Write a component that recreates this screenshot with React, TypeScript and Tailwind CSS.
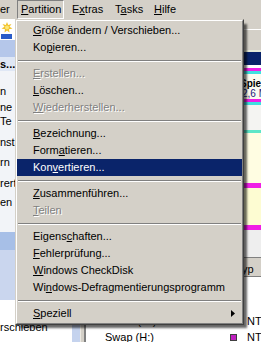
import React from "react";

type Item =
  | { sep: true }
  | { sep?: false; t: string; u: number; dis?: boolean; hl?: boolean; sub?: boolean };

const items: Item[] = [
  { t: "Größe ändern / Verschieben...", u: 0 },
  { t: "Kopieren...", u: 2 },
  { sep: true },
  { t: "Erstellen...", u: 0, dis: true },
  { t: "Löschen...", u: 0 },
  { t: "Wiederherstellen...", u: 0, dis: true },
  { sep: true },
  { t: "Bezeichnung...", u: 0 },
  { t: "Formatieren...", u: 4 },
  { t: "Konvertieren...", u: 3, hl: true },
  { sep: true },
  { t: "Zusammenführen...", u: 0 },
  { t: "Teilen", u: 0, dis: true },
  { sep: true },
  { t: "Eigenschaften...", u: 6 },
  { t: "Fehlerprüfung...", u: 0 },
  { t: "Windows CheckDisk", u: 0 },
  { t: "Windows-Defragmentierungsprogramm", u: 2 },
  { sep: true },
  { t: "Speziell", u: 0, sub: true },
];

function Mn({ t, u }: { t: string; u: number }) {
  return (
    <span className="whitespace-pre">
      {t.slice(0, u)}
      <span className="underline underline-offset-[1px]">{t.charAt(u)}</span>
      {t.slice(u + 1)}
    </span>
  );
}

function Menu() {
  return (
    <div className="absolute left-[15px] top-[19px] w-[229px] border border-t-[#d4d0c8] border-l-[#d4d0c8] border-r-[#404040] border-b-[#404040] bg-[#d4d0c8] shadow-[4px_4px_2px_-1px_rgba(0,0,0,0.6)]">
      <div className="border border-t-white border-l-white border-r-[#808080] border-b-[#808080] py-[1px]">
        {items.map((it, i) =>
          it.sep ? (
            <div key={i} className="h-[9px] flex items-center px-[1px]">
              <div className="w-full h-[2px] border-t border-t-[#808080] border-b border-b-white" />
            </div>
          ) : (
            <div
              key={i}
              className={
                "h-[17px] flex items-center pl-[16px] pr-[8px] relative " +
                (it.hl
                  ? "bg-[#0a246a] text-white"
                  : it.dis
                  ? "text-[#808080] [text-shadow:1px_1px_0_#ffffff]"
                  : "text-black")
              }
            >
              <Mn t={it.t} u={it.u} />
              {it.sub && (
                <svg className="absolute right-[7px] top-[5px]" width="4" height="7" viewBox="0 0 4 7">
                  <path d="M0 0 L4 3.5 L0 7 Z" fill="#000" />
                </svg>
              )}
            </div>
          )
        )}
      </div>
    </div>
  );
}

function Sidebar() {
  return (
    <div className="w-[72px] shrink-0 flex flex-col bg-[#f2f4f8] text-black overflow-hidden">
      <div className="h-[21px] shrink-0 bg-white relative">
        <svg className="absolute left-[1px] top-[3px]" width="12" height="17" viewBox="0 0 12 17">
          <path d="M6 0 L7.2 3 L10.5 2 L8.5 4.8 L11.5 6.5 L8 7.2 L8.5 10.5 L6 8.5 L3.5 10.5 L4 7.2 L0.5 6.5 L3.5 4.8 L1.5 2 L4.8 3 Z" fill="#f2c22a" />
          <circle cx="6" cy="5.5" r="2" fill="#fbe77a" />
          <rect x="0" y="12" width="11" height="5" fill="#2a5cc8" />
        </svg>
      </div>
      <div className="h-[17px] shrink-0 bg-[#b5c7ea]" />
      <div className="h-[14px] shrink-0 bg-[#dfe7f5] flex items-center font-bold">s...</div>
      <div className="h-[12px] shrink-0" />
      <div className="h-[16px] shrink-0 flex items-center">n</div>
      <div className="h-[16px] shrink-0 flex items-center">ne</div>
      <div className="h-[13px] shrink-0 flex items-center">Te</div>
      <div className="h-[6px] shrink-0" />
      <div className="h-[16px] shrink-0 flex items-center">nsta</div>
      <div className="h-[4px] shrink-0" />
      <div className="h-[16px] shrink-0 flex items-center">rn</div>
      <div className="h-[5px] shrink-0" />
      <div className="h-[16px] shrink-0 flex items-center">rert</div>
      <div className="h-[3px] shrink-0" />
      <div className="h-[16px] shrink-0 flex items-center">en</div>
      <div className="h-[22px] shrink-0" />
      <div className="h-[18px] shrink-0 bg-[#a7bfe7]" />
      <div className="h-[50px] shrink-0 bg-[#cad6ee]" />
      <div className="flex-1 bg-white flex flex-col">
        <div className="h-[19px] shrink-0" />
        <div className="h-[16px] shrink-0 flex items-center whitespace-nowrap">rschieben</div>
      </div>
    </div>
  );
}

function RightPane() {
  return (
    <div className="flex-1 min-w-0 flex flex-col bg-white overflow-hidden">
      <div className="h-[11px] shrink-0 bg-[#d4d0c8] border-b border-b-white" />
      <div className="h-[20px] shrink-0 bg-[#d4d0c8]" />
      <div className="h-[2px] shrink-0 bg-[#e6ead8]" />
      <div className="h-[13px] shrink-0 bg-[#0a246a]" />
      <div className="h-[3px] shrink-0 bg-white" />
      <div className="h-[3px] shrink-0 bg-[#f01ee6]" />
      <div className="h-[3px] shrink-0 bg-[#3fe0e0]" />
      <div className="h-[25px] shrink-0 bg-[#fbfbf0] pl-[154px] pt-[5px] flex flex-col text-[10px] leading-[10px] whitespace-nowrap">
        <span className="font-bold">Spiele</span>
        <span className="pl-[2px] text-[#1a1a80]">2,6 MB</span>
      </div>
      <div className="h-[3px] shrink-0 bg-[#f01ee6]" />
      <div className="h-[3px] shrink-0 bg-[#3fe0e0]" />
      <div className="h-[25px] shrink-0 bg-[#f4f4f2]" />
      <div className="h-[3px] shrink-0 bg-[#5ee6c8]" />
      <div className="h-[50px] shrink-0 bg-[#fffde2]" />
      <div className="h-[5px] shrink-0 bg-[#f01ee6]" />
      <div className="h-[37px] shrink-0 bg-[#fdfcd2]" />
      <div className="h-[5px] shrink-0 bg-[#f01ee6]" />
      <div className="h-[27px] shrink-0 bg-[#eeeeee]" />
      <div className="h-[5px] shrink-0 bg-[#d4d0c8] border-t border-t-[#808080]" />
      <div className="h-[15px] shrink-0 bg-[#d4d0c8] border-b border-b-[#808080] pl-[150px] flex items-center whitespace-nowrap">
        Typ
      </div>
      <div className="h-[36px] shrink-0" />
      {[
        { n: "Daten (G:)", c: "#6a2a8a" },
        { n: "Swap (H:)", c: "#c020c0" },
      ].map((r) => (
        <div key={r.n} className="h-[16px] shrink-0 flex items-center whitespace-nowrap">
          <div className="w-[144px] shrink-0 pl-[19px]">{r.n}</div>
          <div className="w-[17px] shrink-0 flex items-center">
            <div className="w-[7px] h-[7px] border border-[#404040]" style={{ backgroundColor: r.c }} />
          </div>
          <div className="shrink-0">NTFS</div>
        </div>
      ))}
    </div>
  );
}

export default function App() {
  return (
    <div className="w-[261px] h-[342px] relative overflow-hidden bg-[#d4d0c8] text-[11px] leading-none text-black font-['Liberation_Sans',Arial,sans-serif]">
      <div className="h-[19px] flex whitespace-nowrap">
        <div className="w-[17px] shrink-0 flex items-center">er</div>
        <div className="w-[47px] shrink-0 flex items-center pl-[3px] border border-t-[#808080] border-l-[#808080] border-b-white border-r-white">
          <Mn t="Partition" u={0} />
        </div>
        <div className="w-[43px] shrink-0 flex items-center pl-[8px]">
          <Mn t="Extras" u={1} />
        </div>
        <div className="w-[39px] shrink-0 flex items-center pl-[8px]">
          <Mn t="Tasks" u={1} />
        </div>
        <div className="flex items-center pl-[8px]">
          <Mn t="Hilfe" u={0} />
        </div>
      </div>
      <div className="h-[323px] flex">
        <Sidebar />
        <div className="w-[8px] shrink-0 bg-[#c5d3ee]" />
        <div className="w-[6px] shrink-0 bg-[#d4d0c8] border-l border-l-[#ece9e2] border-r-2 border-r-[#808080]" />
        <RightPane />
      </div>
      <Menu />
    </div>
  );
}
